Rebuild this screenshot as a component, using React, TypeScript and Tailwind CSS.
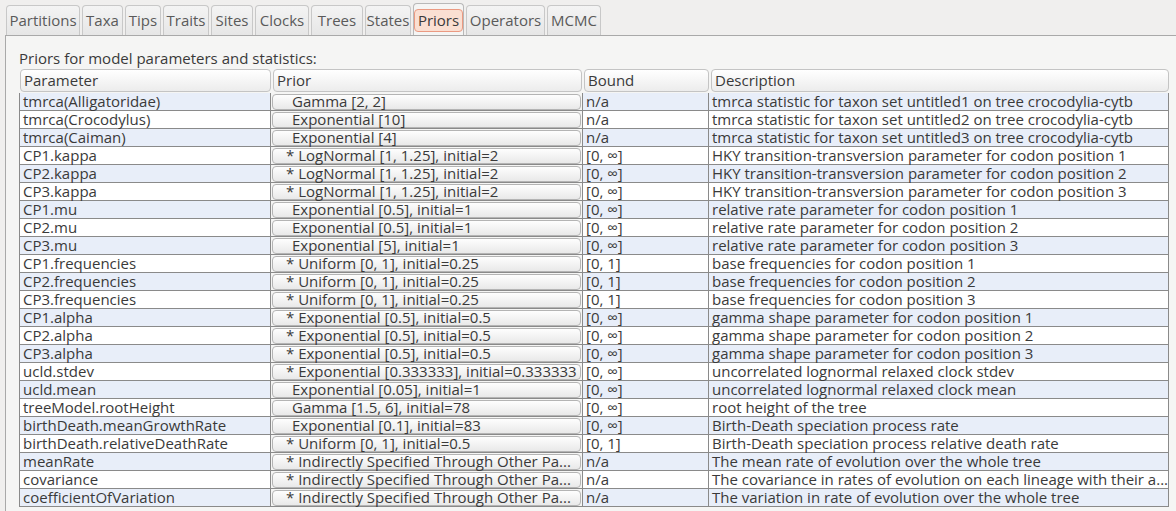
const TABS = [
  { label: 'Partitions', w: 'w-[74px]' },
  { label: 'Taxa', w: 'w-[41px]' },
  { label: 'Tips', w: 'w-[36px]' },
  { label: 'Traits', w: 'w-[46px]' },
  { label: 'Sites', w: 'w-[42px]' },
  { label: 'Clocks', w: 'w-[54px]' },
  { label: 'Trees', w: 'w-[52px]' },
  { label: 'States', w: 'w-[46px]' },
  { label: 'Priors', w: 'w-[51px]', active: true },
  { label: 'Operators', w: 'w-[79px]' },
  { label: 'MCMC', w: 'w-[54px]' },
];

type Row = [string, string, boolean, string, string];

const ROWS: Row[] = [
  ['tmrca(Alligatoridae)', 'Gamma [2, 2]', false, 'n/a', 'tmrca statistic for taxon set untitled1 on tree crocodylia-cytb'],
  ['tmrca(Crocodylus)', 'Exponential [10]', false, 'n/a', 'tmrca statistic for taxon set untitled2 on tree crocodylia-cytb'],
  ['tmrca(Caiman)', 'Exponential [4]', false, 'n/a', 'tmrca statistic for taxon set untitled3 on tree crocodylia-cytb'],
  ['CP1.kappa', 'LogNormal [1, 1.25], initial=2', true, '[0, ∞]', 'HKY transition-transversion parameter for codon position 1'],
  ['CP2.kappa', 'LogNormal [1, 1.25], initial=2', true, '[0, ∞]', 'HKY transition-transversion parameter for codon position 2'],
  ['CP3.kappa', 'LogNormal [1, 1.25], initial=2', true, '[0, ∞]', 'HKY transition-transversion parameter for codon position 3'],
  ['CP1.mu', 'Exponential [0.5], initial=1', false, '[0, ∞]', 'relative rate parameter for codon position 1'],
  ['CP2.mu', 'Exponential [0.5], initial=1', false, '[0, ∞]', 'relative rate parameter for codon position 2'],
  ['CP3.mu', 'Exponential [5], initial=1', false, '[0, ∞]', 'relative rate parameter for codon position 3'],
  ['CP1.frequencies', 'Uniform [0, 1], initial=0.25', true, '[0, 1]', 'base frequencies for codon position 1'],
  ['CP2.frequencies', 'Uniform [0, 1], initial=0.25', true, '[0, 1]', 'base frequencies for codon position 2'],
  ['CP3.frequencies', 'Uniform [0, 1], initial=0.25', true, '[0, 1]', 'base frequencies for codon position 3'],
  ['CP1.alpha', 'Exponential [0.5], initial=0.5', true, '[0, ∞]', 'gamma shape parameter for codon position 1'],
  ['CP2.alpha', 'Exponential [0.5], initial=0.5', true, '[0, ∞]', 'gamma shape parameter for codon position 2'],
  ['CP3.alpha', 'Exponential [0.5], initial=0.5', true, '[0, ∞]', 'gamma shape parameter for codon position 3'],
  ['ucld.stdev', 'Exponential [0.333333], initial=0.333333', true, '[0, ∞]', 'uncorrelated lognormal relaxed clock stdev'],
  ['ucld.mean', 'Exponential [0.05], initial=1', false, '[0, ∞]', 'uncorrelated lognormal relaxed clock mean'],
  ['treeModel.rootHeight', 'Gamma [1.5, 6], initial=78', false, '[0, ∞]', 'root height of the tree'],
  ['birthDeath.meanGrowthRate', 'Exponential [0.1], initial=83', false, '[0, ∞]', 'Birth-Death speciation process rate'],
  ['birthDeath.relativeDeathRate', 'Uniform [0, 1], initial=0.5', true, '[0, 1]', 'Birth-Death speciation process relative death rate'],
  ['meanRate', 'Indirectly Specified Through Other Pa...', true, 'n/a', 'The mean rate of evolution over the whole tree'],
  ['covariance', 'Indirectly Specified Through Other Pa...', true, 'n/a', 'The covariance in rates of evolution on each lineage with their a...'],
  ['coefficientOfVariation', 'Indirectly Specified Through Other Pa...', true, 'n/a', 'The variation in rate of evolution over the whole tree'],
];

function HeaderCell({ label, w }: { label: string; w: string }) {
  return (
    <div
      className={`${w} h-[23px] shrink-0 rounded-[4px] border border-[#c4c4c4] bg-gradient-to-b from-[#ffffff] to-[#ececec] pl-[3px] leading-[21px]`}
    >
      {label}
    </div>
  );
}

export default function App() {
  return (
    <div
      className="flex h-[511px] w-[1176px] flex-col overflow-hidden bg-[#f0efee] text-[15px] text-[#3a3a3a]"
      style={{ fontFamily: '"Open Sans", "DejaVu Sans", sans-serif' }}
    >
      <div className="flex h-[35px] items-end gap-[2px] pl-[6px]">
        {TABS.map((t) =>
          t.active ? (
            <div
              key={t.label}
              className={`${t.w} -mb-px flex h-[33px] items-center justify-center rounded-t-[4px] border border-b-0 border-[#b8b8b8] bg-[#f5f5f4] px-[3px]`}
            >
              <span className="rounded-[4px] border border-[#eb9a82] bg-[#fadfd2] px-[3px] leading-[21px] text-[#3a3a3a]">
                {t.label}
              </span>
            </div>
          ) : (
            <div
              key={t.label}
              className={`${t.w} flex h-[30px] items-center justify-center whitespace-nowrap rounded-t-[4px] border border-b-0 border-[#c8c8c8] bg-gradient-to-b from-[#f4f4f4] to-[#e6e6e6] text-[#5a5a5a]`}
            >
              {t.label}
            </div>
          ),
        )}
      </div>
      <div className="ml-[5px] flex-1 border-t border-l border-[#a9a9a9] bg-[#f5f5f4] pl-[13px] pr-[7px]">
        <div className="pt-[12px] leading-[20px]">Priors for model parameters and statistics:</div>
        <div className="mt-[1px] flex gap-[2px] pl-[1px]">
          <HeaderCell label="Parameter" w="w-[251px]" />
          <HeaderCell label="Prior" w="w-[309px]" />
          <HeaderCell label="Bound" w="w-[125px]" />
          <HeaderCell label="Description" w="w-[458px]" />
        </div>
        <div className="mt-px w-[1150px] border-l border-r border-[#8a8a8a]">
          {ROWS.map(([param, prior, star, bound, desc], i) => {
            const bg = i % 2 === 0 ? 'bg-[#e8eef9]' : 'bg-white';
            return (
              <div key={param} className="flex h-[18px] whitespace-nowrap border-b border-[#8a8a8a] leading-[17px]">
                <div className={`${bg} w-[251px] shrink-0 border-r border-[#8a8a8a] pl-[3px]`}>{param}</div>
                <div className="flex w-[312px] shrink-0 items-center border-r border-[#8a8a8a] bg-[#f5f5f4] px-[1px]">
                  <div
                    className={`h-[16px] w-full rounded-[4px] border border-[#b4b4b4] bg-gradient-to-b from-[#fefefe] to-[#e9e9e9] pb-[2px] leading-[12px] ${star ? 'pl-[13px]' : 'pl-[19px]'}`}
                  >
                    {star ? '* ' : ''}
                    {prior}
                  </div>
                </div>
                <div className={`${bg} w-[126px] shrink-0 border-r border-[#8a8a8a] pl-[3px]`}>{bound}</div>
                <div className={`${bg} min-w-0 flex-1 pl-[3px]`}>{desc}</div>
              </div>
            );
          })}
        </div>
      </div>
    </div>
  );
}
